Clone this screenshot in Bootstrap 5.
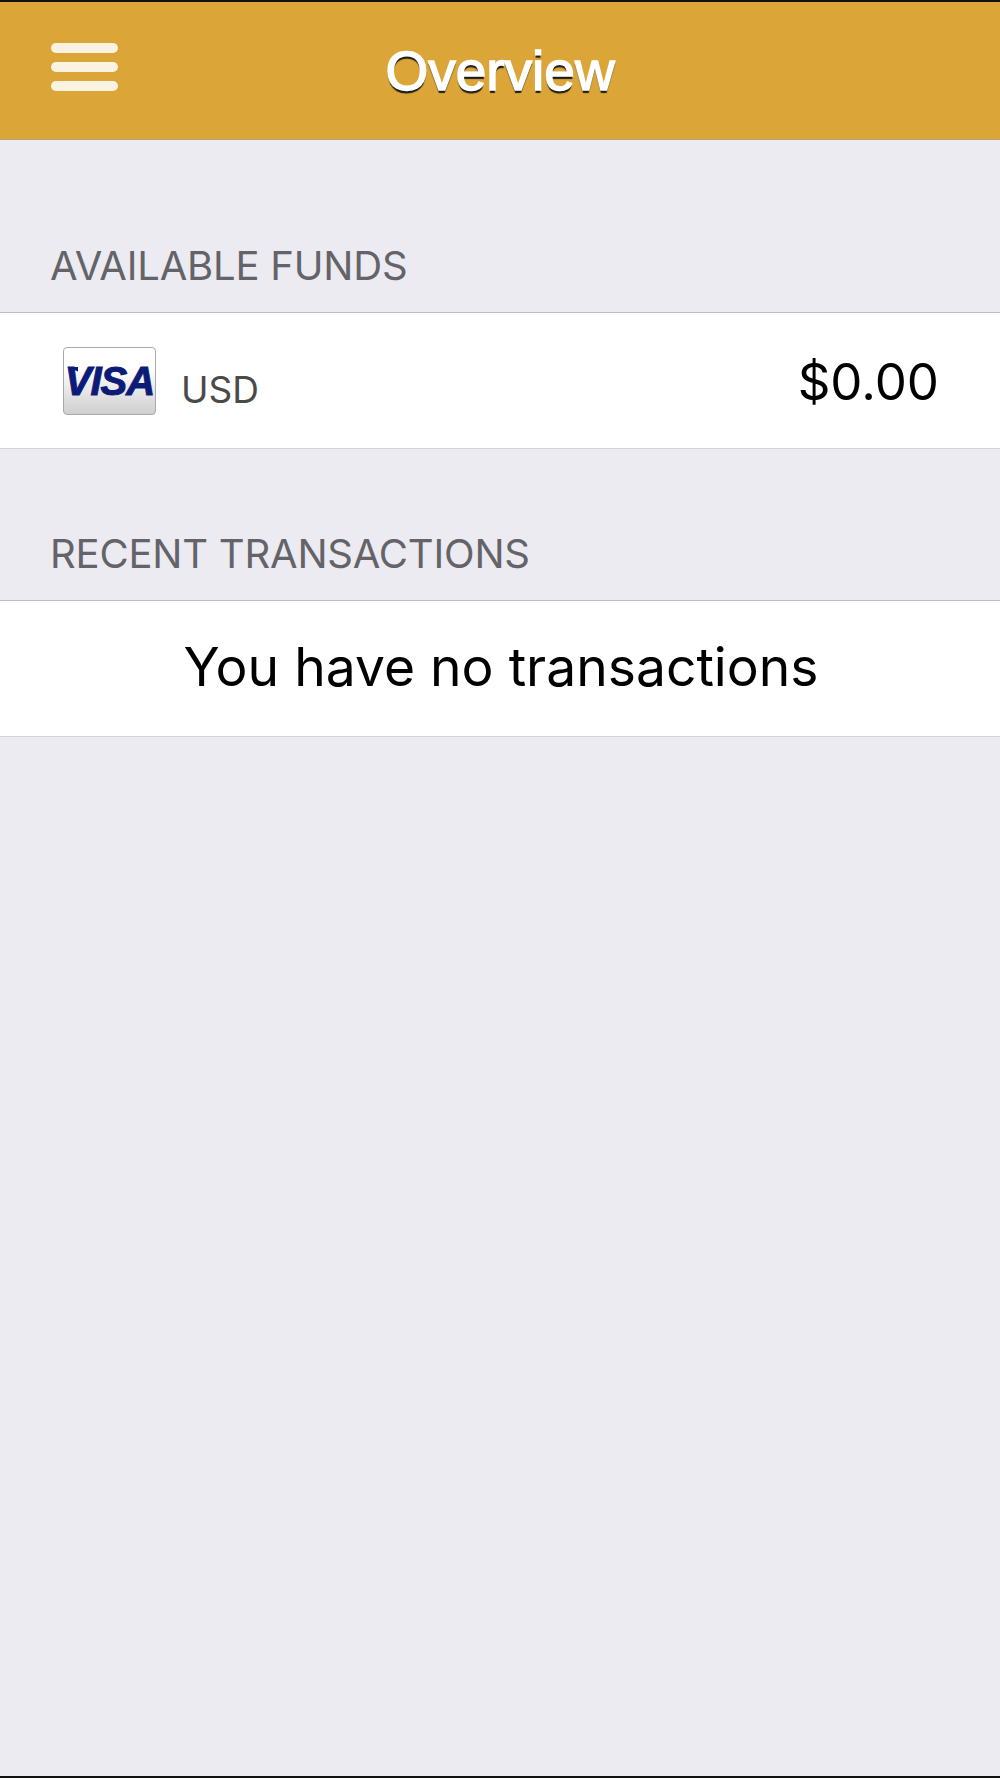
<!DOCTYPE html>
<html lang="en">
<head>
  <meta charset="UTF-8" />
  <meta name="viewport" content="width=device-width, initial-scale=1" />
  <title>Overview</title>
  <link href="https://cdn.jsdelivr.net/npm/bootstrap@5.3.3/dist/css/bootstrap.min.css" rel="stylesheet"/>
  <style>
    html, body {
      height: 100%;
      margin: 0;
    }

    body {
      background-color: #ebebf1;
      font-family: "Inter", "Liberation Sans", sans-serif;
    }

    .screen {
      height: 1778px;
      border-top: 2px solid #111;
      border-bottom: 2px solid #111;
    }

    .top-bar {
      display: grid;
      grid-template-columns: 1fr auto 1fr;
      height: 138px;
      padding: 0 51px;
      background-color: #dca538;
      border-bottom: 1px solid #b9a272;
    }

    .menu-btn {
      width: 67px;
      height: 48px;
      margin-top: 41px;
      padding: 0;
      border: 0;
      background: none;
    }

    .menu-btn span {
      display: block;
      height: 10px;
      border-radius: 5px;
      background-color: #fbf3e2;
    }

    .page-title {
      margin: 0;
      font-family: "Liberation Sans", sans-serif;
      font-size: 55px;
      font-weight: 400;
      color: #fff;
      -webkit-text-stroke: 1.5px #fff;
      text-shadow: 0 3px 1px #1c1c1c;
    }

    .section-label {
      padding: 83px 0 24px 50px;
      font-size: 40px;
      line-height: 44px;
      color: #636368;
      letter-spacing: -0.2px;
    }

    .section-label.first-label {
      padding-top: 104px;
    }

    .info-row {
      background-color: #fff;
      border-top: 1px solid #bcbcc0;
      border-bottom: 1px solid #d4d4d8;
      height: 137px;
    }

    .funds-row {
      padding: 0 61px 0 63px;
    }

    .visa-card {
      position: relative;
      width: 93px;
      height: 68px;
      border: 1px solid #aaa;
      border-radius: 4px;
      background: linear-gradient(#fff 30%, #cfcfcf);
      font-family: "Liberation Sans", sans-serif;
      font-size: 40px;
      font-weight: 700;
      font-style: italic;
      letter-spacing: -1px;
      color: #0c1a78;
      -webkit-text-stroke: 1px #0c1a78;
    }

    /* the little flick on the V */
    .visa-card::before {
      content: "";
      position: absolute;
      left: 2px;
      top: 19px;
      width: 12px;
      height: 5px;
      background-color: #0c1a78;
      clip-path: polygon(0 0, 100% 0, 100% 100%);
    }

    .currency {
      margin: 18px 0 0 25px;
      font-size: 37px;
      color: #4a4a4a;
    }

    .amount {
      margin-top: 3px;
      font-size: 51px;
      color: #000;
    }

    .empty-text {
      margin: 0 0 2px 2px;
      font-size: 53.4px;
      color: #000;
    }
  </style>
</head>
<body>

  <div class="screen">
    <!-- Header -->
    <header class="top-bar">
      <button class="menu-btn d-flex flex-column justify-content-between align-self-start" type="button" aria-label="Menu">
        <span class="w-100"></span>
        <span class="w-100"></span>
        <span class="w-100"></span>
      </button>
      <h1 class="page-title align-self-center">Overview</h1>
    </header>

    <!-- Available funds -->
    <div class="section-label first-label">AVAILABLE FUNDS</div>
    <div class="info-row funds-row d-flex align-items-center">
      <div class="visa-card d-flex align-items-center justify-content-center">VISA</div>
      <span class="currency">USD</span>
      <span class="amount ms-auto">$0.00</span>
    </div>

    <!-- Recent transactions -->
    <div class="section-label">RECENT TRANSACTIONS</div>
    <div class="info-row d-flex align-items-center justify-content-center">
      <span class="empty-text">You have no transactions</span>
    </div>
  </div>

  <script src="https://cdn.jsdelivr.net/npm/bootstrap@5.3.3/dist/js/bootstrap.bundle.min.js"></script>
</body>
</html>
